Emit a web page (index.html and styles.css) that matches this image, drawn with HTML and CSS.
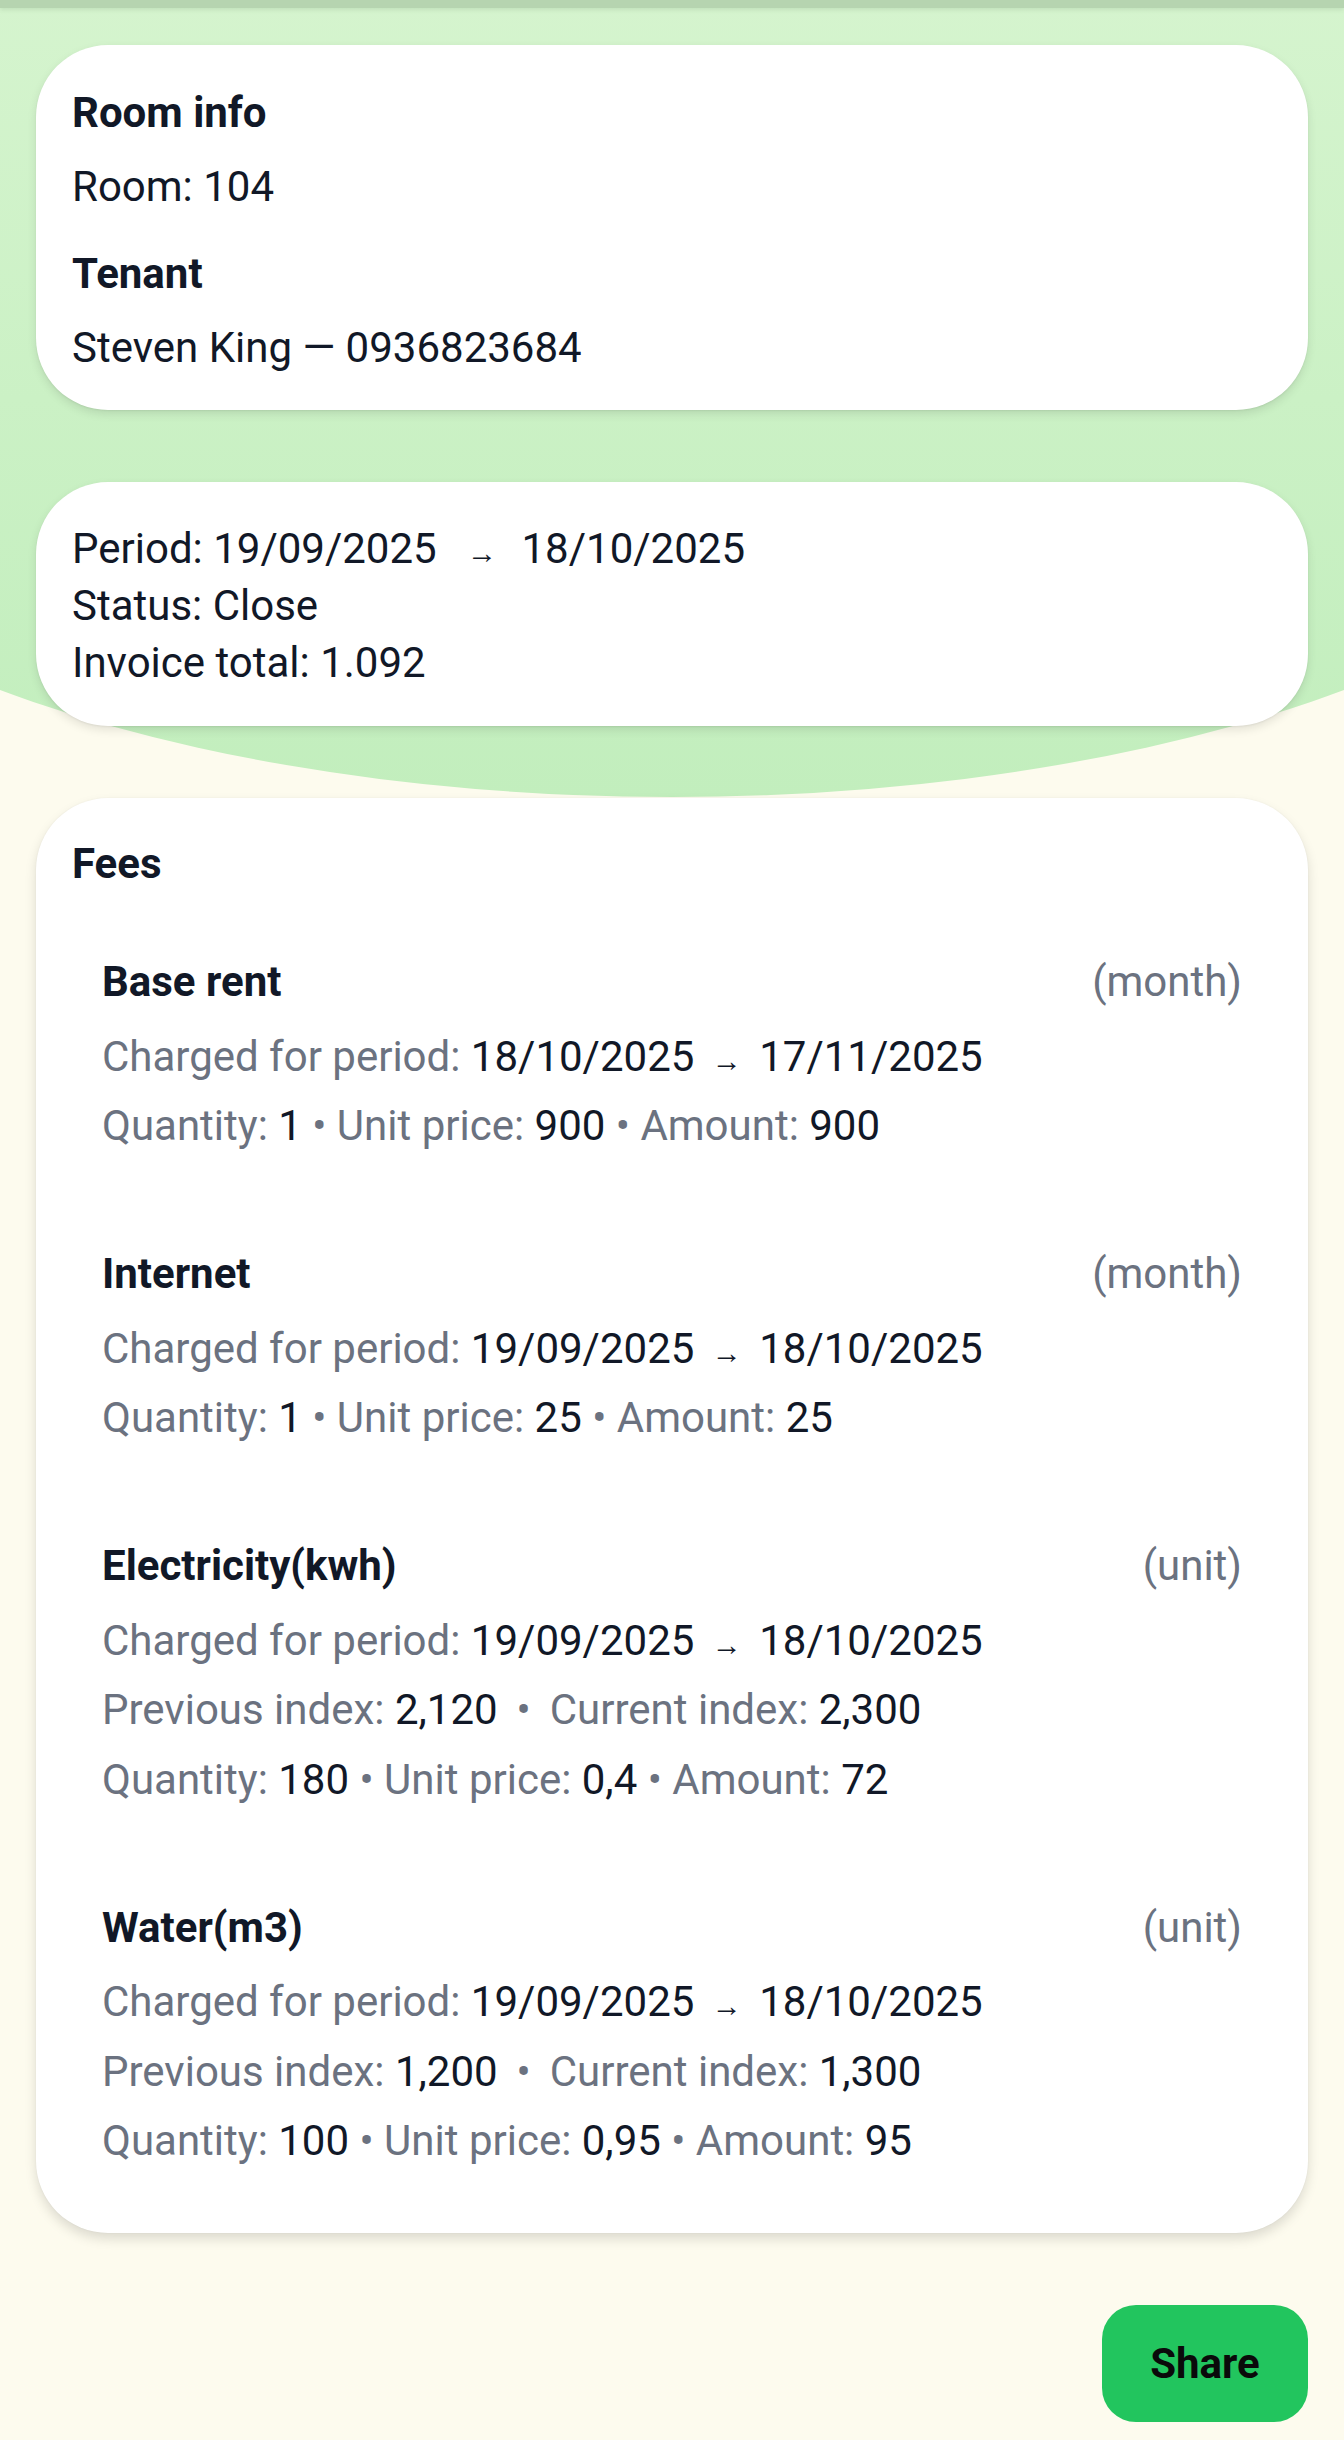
FILE: index.html
```html
<!DOCTYPE html>
<html lang="en">
<head>
<meta charset="utf-8">
<title>Invoice</title>
<link rel="stylesheet" href="styles.css">
</head>
<body>
<div class="screen">
  <div class="appbar-edge"></div>
  <main class="content">
    <section class="card card-room">
      <h2 class="card-title">Room info</h2>
      <p class="line line-value">Room: 104</p>
      <h2 class="card-title card-title-next">Tenant</h2>
      <p class="line line-value">Steven King — 0936823684</p>
    </section>

    <section class="card card-period">
      <p class="line">Period: 19/09/2025 <span class="arrow arrow-wide">→</span> 18/10/2025</p>
      <p class="line">Status: Close</p>
      <p class="line">Invoice total: 1.092</p>
    </section>

    <section class="card card-fees">
      <h2 class="card-title">Fees</h2>

      <div class="fee">
        <div class="fee-head"><span class="fee-name">Base rent</span><span class="fee-unit">(month)</span></div>
        <p class="fee-line fee-line-first"><span class="muted">Charged for period: </span>18/10/2025 <span class="arrow">→</span> 17/11/2025</p>
        <p class="fee-line"><span class="muted">Quantity: </span>1<span class="muted"> • Unit price: </span>900<span class="muted"> • Amount: </span>900</p>
      </div>

      <div class="fee">
        <div class="fee-head"><span class="fee-name">Internet</span><span class="fee-unit">(month)</span></div>
        <p class="fee-line fee-line-first"><span class="muted">Charged for period: </span>19/09/2025 <span class="arrow">→</span> 18/10/2025</p>
        <p class="fee-line"><span class="muted">Quantity: </span>1<span class="muted"> • Unit price: </span>25<span class="muted"> • Amount: </span>25</p>
      </div>

      <div class="fee">
        <div class="fee-head"><span class="fee-name">Electricity(kwh)</span><span class="fee-unit">(unit)</span></div>
        <p class="fee-line fee-line-first"><span class="muted">Charged for period: </span>19/09/2025 <span class="arrow">→</span> 18/10/2025</p>
        <p class="fee-line"><span class="muted">Previous index: </span>2,120<span class="muted sep-wide">•</span><span class="muted">Current index: </span>2,300</p>
        <p class="fee-line"><span class="muted">Quantity: </span>180<span class="muted"> • Unit price: </span>0,4<span class="muted"> • Amount: </span>72</p>
      </div>

      <div class="fee">
        <div class="fee-head"><span class="fee-name">Water(m3)</span><span class="fee-unit">(unit)</span></div>
        <p class="fee-line fee-line-first"><span class="muted">Charged for period: </span>19/09/2025 <span class="arrow">→</span> 18/10/2025</p>
        <p class="fee-line"><span class="muted">Previous index: </span>1,200<span class="muted sep-wide">•</span><span class="muted">Current index: </span>1,300</p>
        <p class="fee-line"><span class="muted">Quantity: </span>100<span class="muted"> • Unit price: </span>0,95<span class="muted"> • Amount: </span>95</p>
      </div>
    </section>

    <div class="actions">
      <button class="share-btn" type="button">Share</button>
    </div>
  </main>
</div>
</body>
</html>
```

FILE: styles.css
```css
* {
  box-sizing: border-box;
}

html, body {
  margin: 0;
  padding: 0;
}

body {
  width: 1344px;
  min-height: 2440px;
  background: #fdfbee;
  font-family: Roboto, "Noto Sans", "Liberation Sans", sans-serif;
  color: #111827;
  overflow: hidden;
}

.screen {
  position: relative;
  min-height: 2440px;
  overflow: hidden;
}

/* large green backdrop shape behind the top cards */
.screen::before {
  content: "";
  position: absolute;
  left: -336px;
  top: 0;
  width: 2016px;
  height: 797px;
  background: linear-gradient(to bottom, #d5f4ce 0%, #cbf1c5 50%, #c2eebd 100%);
  border-bottom-left-radius: 1008px 420px;
  border-bottom-right-radius: 1008px 420px;
  z-index: 0;
}

.appbar-edge {
  position: relative;
  z-index: 2;
  height: 8px;
  background: #b6d4b0;
  box-shadow: 0 2px 4px rgba(60, 90, 60, 0.12);
}

.content {
  position: relative;
  z-index: 1;
  display: flex;
  flex-direction: column;
  gap: 72px;
  padding: 37px 36px 0;
}

.card {
  background: #ffffff;
  border-radius: 72px;
  padding: 38px 36px 34px;
  box-shadow: 0 4px 10px rgba(0, 0, 0, 0.10), 0 1px 2px rgba(0, 0, 0, 0.06);
}

.card-room {
  padding-top: 39px;
}

.card-period {
  padding-top: 38px;
  padding-bottom: 35px;
}

.card-fees {
  padding-top: 37px;
  display: flex;
  flex-direction: column;
  gap: 31px;
  box-shadow: 0 6px 12px rgba(0, 0, 0, 0.13), 0 0 2px rgba(0, 0, 0, 0.05);
}

.card-title {
  margin: 0;
  font-size: 42px;
  line-height: 57px;
  font-weight: 700;
  color: #111827;
}

.card-title-next {
  margin-top: 30px;
}

.line {
  margin: 0;
  font-size: 42px;
  line-height: 57px;
  font-weight: 400;
  color: #111827;
  white-space: pre;
}

.line-value {
  margin-top: 17px;
}

.arrow {
  font-size: 30px;
  line-height: 1;
  margin: 0 7px;
}

.arrow-wide {
  margin: 0 14px 0 20px;
}

.fee {
  padding: 30px 30px;
}

.fee-head {
  display: flex;
  justify-content: space-between;
  align-items: baseline;
  font-size: 42px;
  line-height: 57px;
}

.fee-name {
  font-weight: 700;
  color: #111827;
}

.fee-unit {
  color: #6b7280;
}

.fee-line {
  margin: 12.5px 0 0;
  font-size: 42px;
  line-height: 57px;
  color: #111827;
  white-space: pre;
}

.fee-line-first {
  margin-top: 17.5px;
}

.muted {
  color: #6b7280;
}

.sep-wide {
  margin: 0 19px;
}

.actions {
  display: flex;
  justify-content: flex-end;
}

.share-btn {
  width: 206px;
  height: 117px;
  border: none;
  border-radius: 34px;
  background: #22c55e;
  color: #0a0a0a;
  font-family: Roboto, "Noto Sans", "Liberation Sans", sans-serif;
  font-size: 42px;
  font-weight: 700;
  padding: 0;
  cursor: pointer;
}
```
